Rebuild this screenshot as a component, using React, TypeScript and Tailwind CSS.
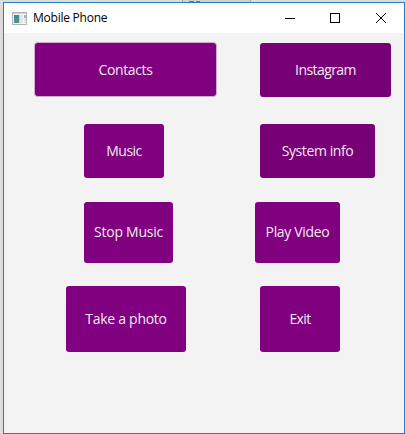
import React from "react";

function AppIcon() {
  return (
    <svg width="15" height="13" viewBox="0 0 15 13" shapeRendering="crispEdges">
      <defs>
        <linearGradient id="pane" x1="0" y1="0" x2="0.6" y2="1">
          <stop offset="0" stopColor="#3f7fae" />
          <stop offset="1" stopColor="#4f9f74" />
        </linearGradient>
      </defs>
      <rect x="0.5" y="0.5" width="14" height="12" fill="#f5f5f5" stroke="#b3b1b4" />
      <rect x="1" y="1" width="13" height="1" fill="#cfd1d3" />
      <rect x="2" y="3" width="5" height="8" fill="url(#pane)" />
      <rect x="7" y="3" width="1" height="8" fill="#c4d4d2" />
      <rect x="8" y="3" width="3" height="8" fill="#e4e4e4" />
      <rect x="12" y="3" width="2" height="3" fill="#8fc0b4" />
      <rect x="12" y="6" width="2" height="5" fill="#e6e6e6" />
    </svg>
  );
}

function PhoneButton({ label, className }: { label: string; className: string }) {
  return (
    <button
      className={`flex shrink-0 items-center justify-center whitespace-nowrap rounded-[3px] text-[14px] leading-[19px] text-[#f4eaf4] ${className}`}
    >
      {label}
    </button>
  );
}

export default function App() {
  return (
    <div className="h-[434px] w-[405px] overflow-hidden bg-[#dcdcdc] pl-[3px] font-['Open_Sans','Noto_Sans',sans-serif]">
      <div className="flex h-[2px]">
        <div className="ml-[179px] flex w-[69px] items-end gap-[2px] border-x border-[#a8a8a8] bg-[#d2d2d2] pl-[6px]">
          <span className="h-px w-[5px] bg-[#777]" />
          <span className="h-px w-[4px] bg-[#777]" />
        </div>
      </div>
      <div className="flex h-[432px] w-[402px] flex-col border border-[#1e80cc] bg-[#f3f3f3]">
        <header className="flex h-[30px] shrink-0 items-center bg-white pl-2">
          <AppIcon />
          <h1 className="ml-[6px] text-[12px] leading-[16px] tracking-[-0.24px] text-black">Mobile Phone</h1>
          <svg className="ml-auto mr-[17px]" width="103" height="12" viewBox="0 0 103 12" fill="none" stroke="#000">
            <path d="M1 6.5h10" />
            <rect x="46.5" y="1.5" width="9" height="9" />
            <path d="M92 1l10 10M102 1l-10 10" />
          </svg>
        </header>
        <main className="flex flex-col">
          <div className="flex pl-[31px] pt-[10px]">
            <PhoneButton label="Contacts" className="h-[53px] w-[181px] bg-[#800080] tracking-[-0.38px] shadow-[0_0_0_1px_rgba(128,0,128,0.3)]" />
            <PhoneButton label="Instagram" className="ml-[44px] h-[54px] w-[131px] bg-[#770077] pb-px tracking-[-0.58px]" />
          </div>
          <div className="mt-[27px] flex pl-[80px]">
            <PhoneButton label="Music" className="h-[54px] w-[80px] bg-[#800080] pb-px tracking-[-0.5px]" />
            <PhoneButton label="System info" className="ml-[96px] h-[54px] w-[115px] bg-[#770077] pb-px tracking-[-0.42px]" />
          </div>
          <div className="mt-[24px] flex pl-[80px]">
            <PhoneButton label="Stop Music" className="h-[61px] w-[89px] bg-[#800080] pb-[2px] tracking-[-0.25px]" />
            <PhoneButton label="Play Video" className="ml-[82px] h-[61px] w-[85px] bg-[#800080] pb-[2px] tracking-[-0.33px]" />
          </div>
          <div className="mt-[23px] flex pl-[62px]">
            <PhoneButton label="Take a photo" className="h-[66px] w-[120px] bg-[#800080] pb-px tracking-[-0.27px]" />
            <PhoneButton label="Exit" className="ml-[74px] h-[66px] w-[80px] bg-[#800080] pb-px tracking-[-0.65px]" />
          </div>
        </main>
      </div>
    </div>
  );
}
